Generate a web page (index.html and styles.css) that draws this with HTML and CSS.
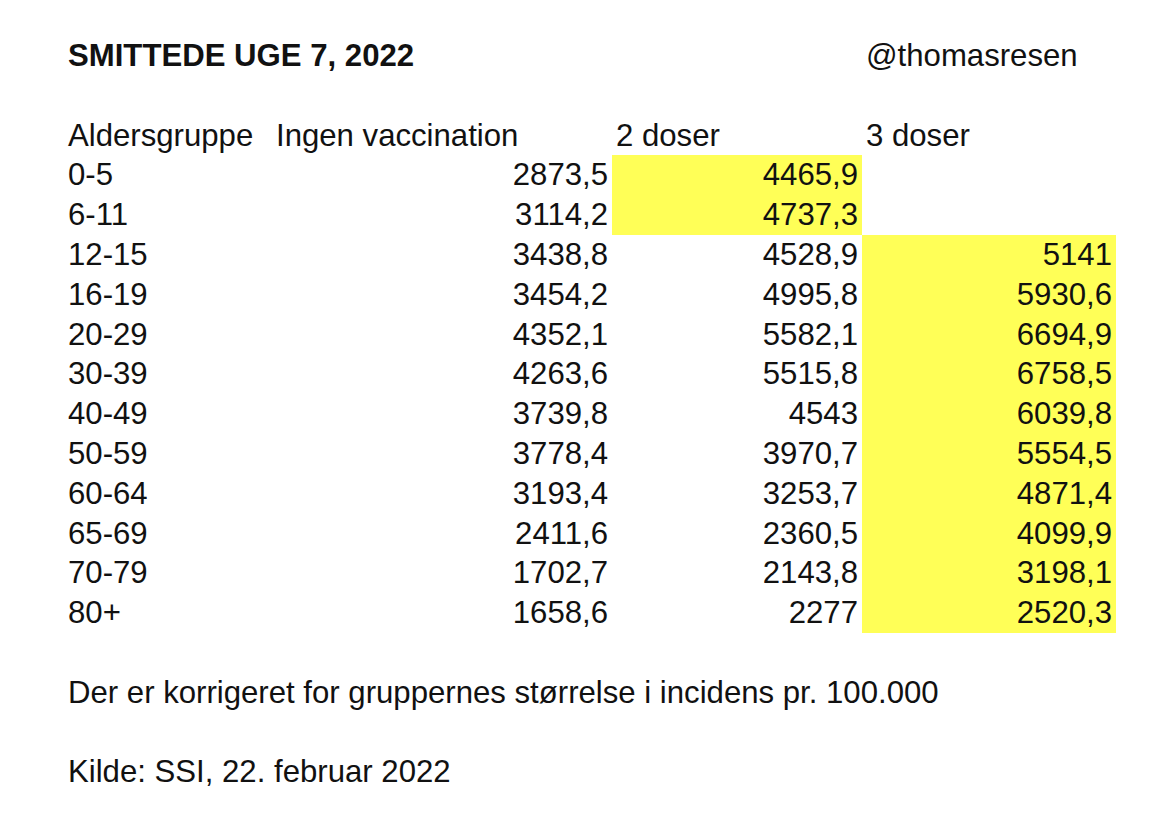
FILE: index.html
```html
<!DOCTYPE html>
<html lang="da">
<head>
<meta charset="utf-8">
<title>Smittede uge 7, 2022</title>
<link rel="stylesheet" href="styles.css">
</head>
<body>
<div class="sheet">
  <div class="cell title">SMITTEDE UGE 7, 2022</div>
  <div class="cell"></div>
  <div class="cell"></div>
  <div class="cell">@thomasresen</div>

  <div class="cell spacer"></div>

  <div class="cell">Aldersgruppe</div>
  <div class="cell">Ingen vaccination</div>
  <div class="cell">2 doser</div>
  <div class="cell">3 doser</div>

  <div class="cell">0-5</div><div class="cell num">2873,5</div><div class="cell num hl">4465,9</div><div class="cell"></div>
  <div class="cell">6-11</div><div class="cell num">3114,2</div><div class="cell num hl">4737,3</div><div class="cell"></div>
  <div class="cell">12-15</div><div class="cell num">3438,8</div><div class="cell num">4528,9</div><div class="cell num hl">5141</div>
  <div class="cell">16-19</div><div class="cell num">3454,2</div><div class="cell num">4995,8</div><div class="cell num hl">5930,6</div>
  <div class="cell">20-29</div><div class="cell num">4352,1</div><div class="cell num">5582,1</div><div class="cell num hl">6694,9</div>
  <div class="cell">30-39</div><div class="cell num">4263,6</div><div class="cell num">5515,8</div><div class="cell num hl">6758,5</div>
  <div class="cell">40-49</div><div class="cell num">3739,8</div><div class="cell num">4543</div><div class="cell num hl">6039,8</div>
  <div class="cell">50-59</div><div class="cell num">3778,4</div><div class="cell num">3970,7</div><div class="cell num hl">5554,5</div>
  <div class="cell">60-64</div><div class="cell num">3193,4</div><div class="cell num">3253,7</div><div class="cell num hl">4871,4</div>
  <div class="cell">65-69</div><div class="cell num">2411,6</div><div class="cell num">2360,5</div><div class="cell num hl">4099,9</div>
  <div class="cell">70-79</div><div class="cell num">1702,7</div><div class="cell num">2143,8</div><div class="cell num hl">3198,1</div>
  <div class="cell">80+</div><div class="cell num">1658,6</div><div class="cell num">2277</div><div class="cell num hl">2520,3</div>

  <div class="cell spacer"></div>
  <div class="cell note">Der er korrigeret for gruppernes størrelse i incidens pr. 100.000</div>
  <div class="cell spacer"></div>
  <div class="cell note">Kilde: SSI, 22. februar 2022</div>
</div>
</body>
</html>
```

FILE: styles.css
```css
html, body {
  margin: 0;
  padding: 0;
  background: #ffffff;
}

body {
  font-family: "Liberation Sans", Arial, sans-serif;
  font-size: 31.15px;
  color: #111111;
}

.sheet {
  display: grid;
  grid-template-columns: 208px 340px 250px 254px;
  grid-auto-rows: 39.8px;
  padding: 36px 0 0 64px;
}

.cell {
  padding: 0 4px;
  line-height: 39.8px;
  white-space: nowrap;
}

.title {
  font-weight: bold;
}

.num {
  text-align: right;
}

.hl {
  background: #ffff57;
}

.spacer,
.note {
  grid-column: 1 / -1;
}
```
